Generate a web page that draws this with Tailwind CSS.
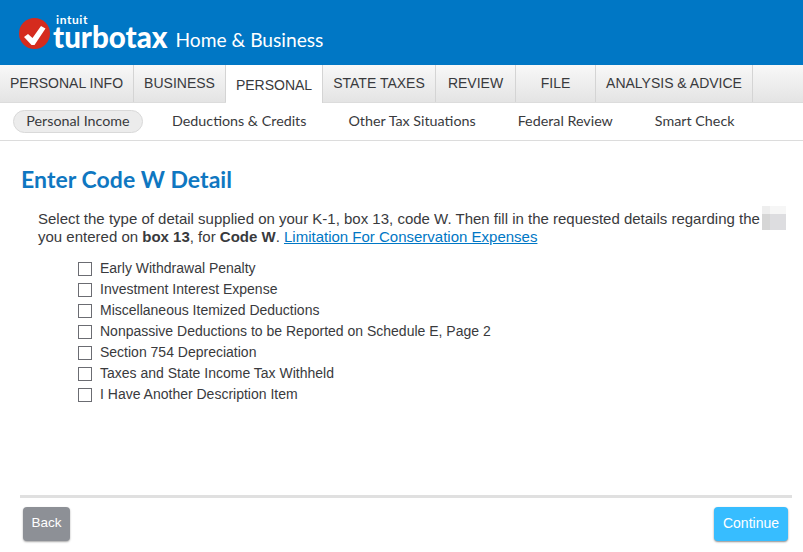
<!DOCTYPE html>
<html lang="en">
<head>
  <meta charset="UTF-8" />
  <title>TurboTax Home &amp; Business</title>
  <script src="https://cdn.jsdelivr.net/npm/@tailwindcss/browser@4"></script>
</head>
<body class="bg-white w-[803px] h-[552px] overflow-hidden font-['Liberation_Sans',sans-serif] text-[#393a3d]">
  <!-- header -->
  <header class="flex items-center gap-[3px] bg-[#0077c5] pl-[19px] h-[65px]">
    <svg class="shrink-0 mt-[1px] w-[31px] h-[31px]" viewBox="0 0 31 31">
      <circle cx="15.5" cy="15.5" r="15.5" fill="#d52b1e" />
      <path d="M5 19 L9 16 L13.5 20 L22 8 L26.5 10.5 L15.5 27 L12.5 27 Z" fill="#fff" />
    </svg>
    <div class="flex flex-col mt-[-1px] text-white">
      <span class="ml-[3px] h-[9px] font-['Lato',sans-serif] font-bold text-[12px] leading-[9px] tracking-[0.6px]">intuit</span>
      <span class="h-[25px] font-['Lato',sans-serif] font-black text-[29.5px] leading-[25px]">turbotax</span>
    </div>
    <span class="mt-[16px] ml-[5px] font-['Lato',sans-serif] text-[19.2px] text-white">Home &amp; Business</span>
  </header>

  <!-- main tabs -->
  <nav class="flex bg-gradient-to-b from-[#f8f8f8] to-[#e4e4e4] border-[#dcdcdc] border-b h-[38px] text-[14px]">
    <a class="flex justify-center items-center border-[#d4d4d4] border-r w-[134px]">PERSONAL INFO</a>
    <a class="flex justify-center items-center border-[#d4d4d4] border-r w-[92px]">BUSINESS</a>
    <a class="flex justify-center items-center bg-white mb-[-1px] pt-[2px] border-[#d4d4d4] border-r w-[97px]">PERSONAL</a>
    <a class="flex justify-center items-center border-[#d4d4d4] border-r w-[113px]">STATE TAXES</a>
    <a class="flex justify-center items-center border-[#d4d4d4] border-r w-[80px]">REVIEW</a>
    <a class="flex justify-center items-center border-[#d4d4d4] border-r w-[80px]">FILE</a>
    <a class="flex justify-center items-center border-[#d4d4d4] border-r w-[157px]">ANALYSIS &amp; ADVICE</a>
  </nav>

  <!-- sub tabs -->
  <nav class="flex items-center border-[#dcdcdc] border-b h-[38px] font-['Lato',sans-serif] text-[14.3px] leading-[20px]">
    <a class="flex justify-center items-center bg-[#ececec] ml-[13px] pb-[1px] border border-[#d9d9d9] rounded-full w-[130px] h-[23px]">Personal Income</a>
    <a class="mb-[2px] ml-[29px]">Deductions &amp; Credits</a>
    <a class="mb-[2px] ml-[42px]">Other Tax Situations</a>
    <a class="mb-[2px] ml-[42px]">Federal Review</a>
    <a class="mb-[2px] ml-[42px]">Smart Check</a>
  </nav>

  <main class="relative px-[21px]">
    <h1 class="pt-[24px] font-['Lato',sans-serif] font-bold text-[#0f77c1] text-[23px] leading-[28px] tracking-[0.05px]">Enter Code W Detail</h1>

    <p class="mt-[17px] pl-[17px] text-[15px] leading-[18px]">
      Select the type of detail supplied on your K-1, box 13, code W. Then fill in the requested details regarding the<br />
      you entered on <b>box 13</b>, for <b>Code W</b>. <a class="text-[#0077c5] underline">Limitation For Conservation Expenses</a>
    </p>
    <!-- blurred out value at the end of the first line -->
    <div class="top-[65px] left-[762px] absolute grid grid-cols-3 grid-rows-[8px_16px] w-[24px] h-[24px]">
      <div class="bg-[#eeeeee]"></div>
      <div class="bg-[#f6f6f6]"></div>
      <div class="bg-[#f6f6f6]"></div>
      <div class="bg-[#d6d6d6]"></div>
      <div class="bg-[#dddde0]"></div>
      <div class="bg-[#dddde0]"></div>
    </div>

    <ul class="mt-[12px] pl-[57px] text-[14px]">
      <li class="flex items-center gap-[8px] h-[21px]"><span class="border border-[#6b6c72] w-[14px] h-[14px]"></span>Early Withdrawal Penalty</li>
      <li class="flex items-center gap-[8px] h-[21px]"><span class="border border-[#6b6c72] w-[14px] h-[14px]"></span>Investment Interest Expense</li>
      <li class="flex items-center gap-[8px] h-[21px]"><span class="border border-[#6b6c72] w-[14px] h-[14px]"></span>Miscellaneous Itemized Deductions</li>
      <li class="flex items-center gap-[8px] h-[21px]"><span class="border border-[#6b6c72] w-[14px] h-[14px]"></span>Nonpassive Deductions to be Reported on Schedule E, Page 2</li>
      <li class="flex items-center gap-[8px] h-[21px]"><span class="border border-[#6b6c72] w-[14px] h-[14px]"></span>Section 754 Depreciation</li>
      <li class="flex items-center gap-[8px] h-[21px]"><span class="border border-[#6b6c72] w-[14px] h-[14px]"></span>Taxes and State Income Tax Withheld</li>
      <li class="flex items-center gap-[8px] h-[21px]"><span class="border border-[#6b6c72] w-[14px] h-[14px]"></span>I Have Another Description Item</li>
    </ul>
  </main>

  <footer class="flex justify-between mt-[90px] mr-[11px] ml-[20px] pt-[9px] pr-[4px] pl-[3px] border-[#e0e0e0] border-t-[3px]">
    <button class="bg-[#8d9096] shadow-[0_1px_2px_rgba(0,0,0,0.35)] pb-[1px] rounded-[4px] w-[47px] h-[34px] text-[13.5px] text-white">Back</button>
    <button class="bg-[#37bdff] shadow-[0_1px_2px_rgba(0,0,0,0.45)] pb-[1px] rounded-[4px] w-[74px] h-[34px] text-[14px] text-white">Continue</button>
  </footer>
</body>
</html>
